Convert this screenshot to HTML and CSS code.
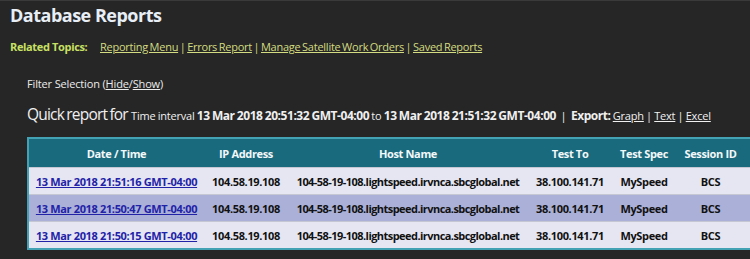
FILE: index.html
```html
<!DOCTYPE html>
<html>
<head>
<meta charset="utf-8">
<link rel="stylesheet" href="styles.css">
</head>
<body>
<div class="page">
  <h1 class="title">Database Reports</h1>
  <div class="related">
    <span class="related-label">Related Topics:</span>
    <a href="#">Reporting Menu</a> | <a href="#">Errors Report</a> | <a href="#">Manage Satellite Work Orders</a> | <a href="#">Saved Reports</a>
  </div>
  <div class="content">
    <div class="filter">Filter Selection (<a href="#">Hide</a>/<a href="#">Show</a>)</div>
    <div class="quick">
      <span class="quick-big">Quick report for</span>
      <span class="quick-small">Time interval <b>13 Mar 2018 20:51:32 GMT-04:00</b> to <b>13 Mar 2018 21:51:32 GMT-04:00</b> &nbsp;|&nbsp; <b>Export:</b> <a href="#">Graph</a> | <a href="#">Text</a> | <a href="#">Excel</a></span>
    </div>
    <table class="report">
      <colgroup>
        <col class="c-date"><col class="c-ip"><col class="c-host"><col class="c-to"><col class="c-spec"><col class="c-sess">
      </colgroup>
      <thead>
        <tr><th>Date / Time</th><th>IP Address</th><th>Host Name</th><th>Test To</th><th>Test Spec</th><th>Session ID</th></tr>
      </thead>
      <tbody>
        <tr class="odd"><td><a href="#">13 Mar 2018 21:51:16 GMT-04:00</a></td><td>104.58.19.108</td><td class="host">104-58-19-108.lightspeed.irvnca.sbcglobal.net</td><td>38.100.141.71</td><td>MySpeed</td><td>BCS</td></tr>
        <tr class="even"><td><a href="#">13 Mar 2018 21:50:47 GMT-04:00</a></td><td>104.58.19.108</td><td class="host">104-58-19-108.lightspeed.irvnca.sbcglobal.net</td><td>38.100.141.71</td><td>MySpeed</td><td>BCS</td></tr>
        <tr class="odd"><td><a href="#">13 Mar 2018 21:50:15 GMT-04:00</a></td><td>104.58.19.108</td><td class="host">104-58-19-108.lightspeed.irvnca.sbcglobal.net</td><td>38.100.141.71</td><td>MySpeed</td><td>BCS</td></tr>
      </tbody>
    </table>
  </div>
</div>
</body>
</html>
```

FILE: styles.css
```css
html, body {
  margin: 0;
  padding: 0;
  background: #262626;
  overflow: hidden;
}
body {
  border-top: 1px solid #3a3a3a;
  font-family: "Open Sans", "Noto Sans", sans-serif;
  color: #f0f0f0;
}
.page {
  padding: 0 0 0 10px;
}
.title {
  margin: 0;
  padding-top: 2px;
  font-size: 18px;
  line-height: 24px;
  font-weight: 700;
  color: #e8eef6;
  letter-spacing: -0.5px;
}
.related {
  margin-top: 12px;
  font-size: 11px;
  line-height: 16px;
  color: #d3dc80;
  letter-spacing: -0.25px;
  word-spacing: -1px;
}
.related-label {
  font-weight: 700;
  color: #c8e063;
  margin-right: 11px;
  letter-spacing: -0.35px;
  word-spacing: 0;
}
.related a {
  color: #d3dc80;
}
.content {
  padding-left: 17px;
}
.filter {
  margin-top: 21px;
  font-size: 11px;
  line-height: 16px;
  color: #ececec;
  letter-spacing: -0.15px;
}
.filter a { color: #ececec; }
.quick {
  margin-top: 10px;
  line-height: 24px;
  color: #f0f0f0;
  word-spacing: -1px;
}
.quick-big {
  font-size: 15.5px;
  font-weight: 400;
  letter-spacing: -0.8px;
}
.quick-small {
  font-size: 11px;
  letter-spacing: -0.2px;
  word-spacing: -0.4px;
}
.quick-small b {
  font-size: 12px;
  letter-spacing: -0.45px;
}
.quick-small a { color: #f0f0f0; }
.report {
  margin-top: 9px;
  border-collapse: collapse;
  table-layout: fixed;
  width: 726px;
  border: 2px solid #43a2b4;
  font-size: 11px;
  letter-spacing: -0.35px;
  word-spacing: 0;
}
.c-date { width: 176px; }
.c-ip { width: 84px; }
.c-host { width: 240px; }
.c-to { width: 84px; }
.c-spec { width: 64px; }
.c-sess { width: 78px; }
.report th {
  background: #1a6a7e;
  color: #f4f8fa;
  font-weight: 700;
  height: 28px;
  padding: 0 2px;
  text-align: center;
}
.report th:last-child { padding-right: 10px; }
.report td {
  height: 26px;
  padding: 0 2px;
  text-align: center;
  font-weight: 700;
  color: #111;
  border-top: 1px solid #c5c7d3;
  white-space: nowrap;
}
.report td.host { letter-spacing: -0.55px; }
.report td:last-child { padding-right: 10px; }
.report tr.odd td { background: #e5e6f1; }
.report tr.even td { background: #aab0d7; }
.report td a { color: #2222a8; }
```
